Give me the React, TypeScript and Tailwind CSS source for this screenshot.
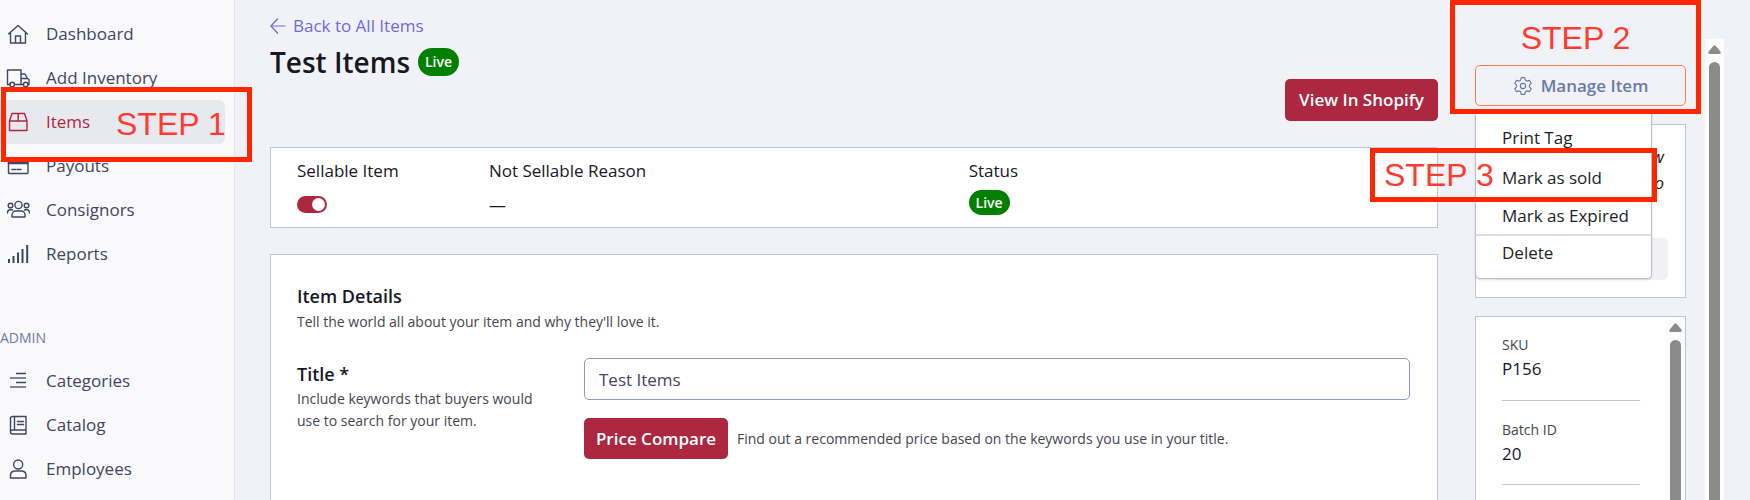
import { ReactNode } from 'react'

type navItem = { name: string, icon: ReactNode, active?: boolean }

function Icon(props: { children: ReactNode, className?: string }) {
    return (
        <svg viewBox="0 0 24 24" className={props.className ?? 'h-6 w-6 shrink-0'} fill="none" stroke="currentColor" strokeWidth="1.4" strokeLinejoin="round" strokeLinecap="round" aria-hidden="true">
            {props.children}
        </svg>
    )
}

const mainNav: navItem[] = [
    { name: 'Dashboard', icon: <Icon><path d="M2.500 12 12 3.500l9.500 8.500M4.500 10.500v10.500h15v-10.500M9.500 21v-7h5v7" /></Icon> },
    { name: 'Add Inventory', icon: <Icon><path d="M4 18.500h-2.500v-14.500h13.500v14.500h-6.500M15 8h4l2.500 4.500 1.500 1v5h-1M17.500 18.500h-2.500M15 12.500h6.500" /><circle cx="6.200" cy="18.500" r="2.300" /><circle cx="19.700" cy="18.500" r="2.300" /></Icon> },
    { name: 'Items', active: true, icon: <Icon><path d="M3.500 11v9.500h17.500v-9.500L18.500 3.500h-12.500zM3.500 11h17.500M12.200 3.500v7.500" /></Icon> },
    { name: 'Payouts', icon: <Icon><rect x="2.500" y="4.500" width="19.500" height="15" rx="1" /><path d="M2.500 8h19.500M2.500 9.500h19.500M6 15.500h3.500M11 15.500h4" /></Icon> },
    { name: 'Consignors', icon: <Icon><circle cx="12.500" cy="7" r="3.600" /><path d="M6 19v-2a4 4 0 0 1 4-4h5a4 4 0 0 1 4 4v2z" /><circle cx="4.500" cy="7.500" r="2.300" /><circle cx="20.500" cy="7.500" r="2.300" /><path d="M1.500 15c0-2.500 1-3.500 3.500-3.500l1.500.5M23.500 15c0-2.500-1-3.500-3.500-3.500l-1.500.5" /></Icon> },
    { name: 'Reports', icon: <Icon><path strokeWidth="2" strokeLinecap="butt" d="M3 21v-4M7.500 21v-7M12 21v-10.500M16.500 21V7M21.200 21V3" /></Icon> },
]

const adminNav: navItem[] = [
    { name: 'Categories', icon: <Icon><path strokeLinecap="butt" d="M10 4.500h10M10 13.500h10" /><path strokeLinecap="butt" strokeWidth="2" opacity=".65" d="M4 9h16M4 18h16" /></Icon> },
    { name: 'Catalog', icon: <Icon><path d="M20 17V3.500h-13.500a2 2 0 0 0-2 2v13.500M20 17h-13.500a2 2 0 0 0 0 4h13.500v-4M8.500 3.500v13.500M11.500 8.500h6M11.500 11.500h6" /></Icon> },
    { name: 'Employees', icon: <Icon><circle cx="12.200" cy="7.500" r="4.500" /><path d="M4.500 21v-2.500a4.500 4.500 0 0 1 4-4.500h7.500a4.500 4.500 0 0 1 4 4.500v2.500z" /></Icon> },
]

function NavLink(props: { item: navItem }) {
    return (
        <li className="relative">
            <a href="#" className={props.item.active
                ? 'flex h-11 items-center gap-4 rounded-r-md bg-[#e8e9ee] pl-[6px] text-[#b1253f]'
                : 'flex h-11 items-center gap-4 rounded-r-md pl-[6px] text-[#41465f]'}>
                {props.item.icon}
                {props.item.name}
            </a>
            {props.item.active && (
                <div className="absolute top-[-13px] left-px z-10 flex h-[75px] w-[251px] items-center border-5 border-[#ff2600] pb-[2px] pl-[110px]">
                    <StepText>STEP 1</StepText>
                </div>
            )}
        </li>
    )
}

function StepText(props: { children: ReactNode }) {
    return <span className="font-['Liberation_Sans',Arial,sans-serif] text-[32px] leading-8 whitespace-nowrap text-[#ff3b30]">{props.children}</span>
}

function LiveBadge(props: { className: string }) {
    return <span className={`flex w-[41px] items-center justify-center rounded-full bg-[#008000] text-sm font-semibold text-white ${props.className}`}>Live</span>
}

function ScrollBar(props: { className: string }) {
    return (
        <div className={`flex shrink-0 flex-col items-center gap-2 bg-[#fcfcfc] pt-[6px] ${props.className}`}>
            <svg viewBox="0 0 13 9" className="h-[9px] w-[13px] shrink-0" fill="#8b8b8b" aria-hidden="true">
                <path d="M5.500.8q1-1 2 0l5 6q.8 2-1 2.200h-10q-1.800-.2-1-2.200z" />
            </svg>
            <div className="w-[11px] flex-1 rounded-t-full bg-[#8b8b8b]"></div>
        </div>
    )
}

function ManageMenu() {
    return (
        <div className="relative">
            <button type="button" className="relative z-20 flex h-[41px] w-full items-center justify-center gap-2 rounded-[5px] border border-[#ff7a50] bg-[#f1f2f8] font-semibold text-[#6c7aa3]">
                <Icon className="h-5 w-5">
                    <path d="M9.900 2h4.200l.8 3 1.900 1.100 3-.9 2.100 3.700-2.200 2.100v2l2.200 2.100-2.100 3.700-3-.9-1.900 1.100-.8 3H9.900l-.8-3-1.900-1.100-3 .9-2.100-3.700L4.300 13v-2L2.100 8.900l2.100-3.700 3 .9L9.100 5z" />
                    <circle cx="12" cy="12" r="3.200" />
                </Icon>
                Manage Item
            </button>
            <ul className="absolute top-[46px] left-0 z-10 w-[177px] rounded-b-[5px] border border-[#bdbfca] bg-white pt-[6px] text-[#1d1f27] shadow-sm">
                <li><button type="button" className="h-10 w-full pl-[26px] text-left">Print Tag</button></li>
                <li><button type="button" className="h-10 w-full pl-[26px] text-left">Mark as sold</button></li>
                <li className="border-b-2 border-[#dcdee8]"><button type="button" className="h-9 w-full pl-[26px] text-left">Mark as Expired</button></li>
                <li><button type="button" className="h-[42px] w-full pb-2 pl-[26px] text-left">Delete</button></li>
            </ul>
            <div className="absolute top-[-65px] left-[-25px] z-10 flex h-[114px] w-[251px] justify-center border-5 border-[#ff2600] pt-[17px]">
                <StepText>STEP 2</StepText>
            </div>
            <div className="absolute top-[83px] left-[-105px] z-10 flex h-[54px] w-[287px] items-center border-5 border-[#ff2600] pl-[9px]">
                <StepText>STEP 3</StepText>
            </div>
        </div>
    )
}

export default function App() {
    return (
        <div className="flex h-screen overflow-hidden bg-[#f1f2f8] font-['Open_Sans','Noto_Sans',sans-serif] text-[17px] leading-6 text-[#16181f]">
            <nav className="w-[235px] shrink-0 border-r border-[#e5e7ee] bg-[#f9f9fc] pt-3 pr-[9px]">
                <ul>
                    {mainNav.map((a) => <NavLink key={a.name} item={a} />)}
                </ul>
                <div className="mt-[50px] mb-[9px] text-sm leading-6 text-[#6f7ba3]">ADMIN</div>
                <ul>
                    {adminNav.map((a) => <NavLink key={a.name} item={a} />)}
                </ul>
            </nav>

            <main className="flex min-w-0 flex-1 flex-col pl-[35px]">
                <a href="#" className="mt-[14px] flex items-center gap-[7px] self-start text-[#6f69e0]">
                    <svg viewBox="0 0 16 16" className="h-4 w-4" fill="none" stroke="currentColor" strokeWidth="1.2" aria-hidden="true">
                        <path d="M15.500 8H.8M8 .5.800 8 8 15.500" />
                    </svg>
                    Back to All Items
                </a>
                <div className="mt-2 flex h-8 items-center gap-2">
                    <h1 className="text-[28px] leading-8 font-semibold">Test Items</h1>
                    <LiveBadge className="h-7" />
                </div>
                <button type="button" className="mt-px h-[42px] w-[153px] self-end rounded-[5px] bg-[#ad2740] font-semibold whitespace-nowrap text-white">View In Shopify</button>

                <section className="mt-[26px] grid h-[81px] shrink-0 grid-cols-[40fr_100fr_92fr] border border-[#bfc4d8] bg-white pt-[11px] pr-[27px] pl-[26px]">
                    <div>
                        <label htmlFor="sellable">Sellable Item</label>
                        <input id="sellable" type="checkbox" defaultChecked className="mt-[13px] flex h-[17px] w-[30px] appearance-none items-center rounded-full bg-[#ad2740] pl-[15px] before:h-[13px] before:w-[13px] before:rounded-full before:bg-white" />
                    </div>
                    <div>
                        <div>Not Sellable Reason</div>
                        <div className="mt-[10px]">—</div>
                    </div>
                    <div>
                        <div>Status</div>
                        <LiveBadge className="mt-[7px] h-[25px]" />
                    </div>
                </section>

                <section className="mt-[26px] flex-1 border border-b-0 border-[#bfc4d8] bg-white pt-[29px] pr-[27px] pl-[26px]">
                    <h2 className="text-lg leading-6 font-semibold">Item Details</h2>
                    <p className="mt-[3px] text-sm leading-[22px] text-[#44464f]">Tell the world all about your item and why they'll love it.</p>
                    <div className="mt-[25px] flex">
                        <div className="w-[287px] shrink-0 pt-1">
                            <label htmlFor="title" className="block text-lg leading-6 font-semibold">Title *</label>
                            <p className="mt-[2px] w-[245px] text-sm leading-[22px] text-[#44464f]">Include keywords that buyers would use to search for your item.</p>
                        </div>
                        <div className="flex-1">
                            <input id="title" type="text" defaultValue="Test Items" className="block h-[42px] w-full rounded-[5px] border border-[#919bbd] bg-white px-[14px] text-[#41465f]" />
                            <div className="mt-[18px] flex items-center gap-[9px]">
                                <button type="button" className="h-[41px] w-36 rounded-[5px] bg-[#ad2740] font-semibold whitespace-nowrap text-white">Price Compare</button>
                                <p className="text-sm text-[#44464f]">Find out a recommended price based on the keywords you use in your title.</p>
                            </div>
                        </div>
                    </div>
                </section>
            </main>

            <aside className="ml-[37px] flex w-[211px] shrink-0 flex-col pt-[65px]">
                <ManageMenu />
                <section className="mt-[18px] flex h-[174px] shrink-0 flex-col border border-[#bfc4d8] bg-white pt-[19px] pr-[17px] pl-[17px]">
                    <p className="pr-1 text-right leading-[26px] italic">w<br />to</p>
                    <div className="mt-[42px] h-[42px] rounded-[5px] bg-[#f0f0f5]"></div>
                </section>
                <section className="mt-[18px] flex flex-1 border border-b-0 border-[#bfc4d8] bg-white">
                    <dl className="flex-1 pt-4 pr-[26px] pl-[26px]">
                        <dt className="text-sm leading-6 text-[#44464f]">SKU</dt>
                        <dd className="mb-[17px] border-b border-[#bfc4d8] pb-[19px]">P156</dd>
                        <dt className="text-sm leading-6 text-[#44464f]">Batch ID</dt>
                        <dd className="border-b border-[#bfc4d8] pb-[18px]">20</dd>
                    </dl>
                    <ScrollBar className="w-[19px]" />
                </section>
            </aside>

            <ScrollBar className="mt-[39px] mr-[26px] ml-[19px] w-[19px]" />
        </div>
    )
}
